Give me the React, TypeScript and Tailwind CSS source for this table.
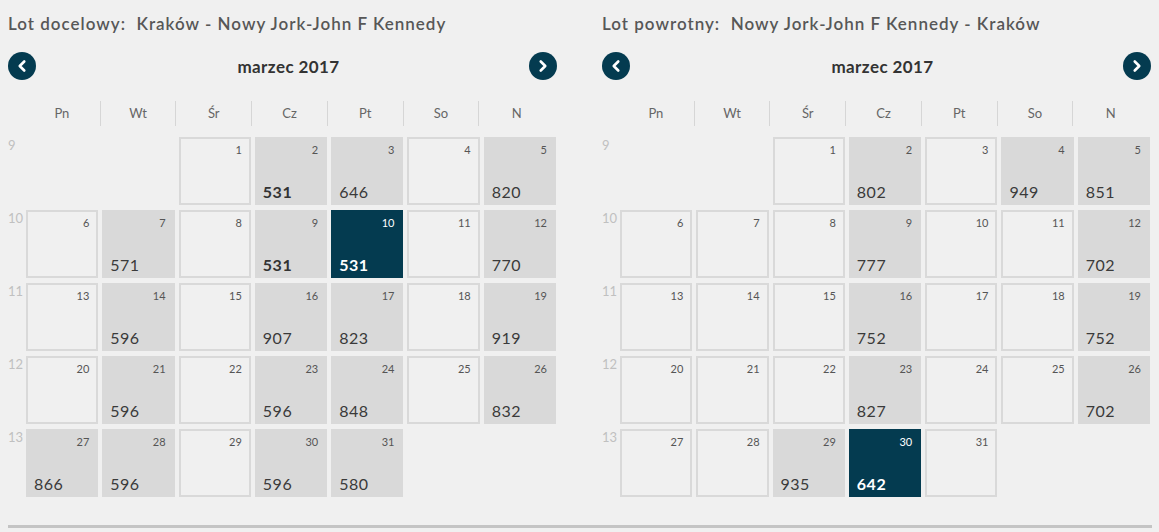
import { ChevronLeft, ChevronRight } from 'lucide-react';

type Day = { d: number; price?: number; best?: boolean; selected?: boolean };

const dayNames = ['Pn', 'Wt', 'Śr', 'Cz', 'Pt', 'So', 'N'];
const weeks = [9, 10, 11, 12, 13];

const outbound: (Day | null)[] = [
  null, null,
  { d: 1 }, { d: 2, price: 531, best: true }, { d: 3, price: 646 }, { d: 4 }, { d: 5, price: 820 },
  { d: 6 }, { d: 7, price: 571 }, { d: 8 }, { d: 9, price: 531, best: true }, { d: 10, price: 531, selected: true }, { d: 11 }, { d: 12, price: 770 },
  { d: 13 }, { d: 14, price: 596 }, { d: 15 }, { d: 16, price: 907 }, { d: 17, price: 823 }, { d: 18 }, { d: 19, price: 919 },
  { d: 20 }, { d: 21, price: 596 }, { d: 22 }, { d: 23, price: 596 }, { d: 24, price: 848 }, { d: 25 }, { d: 26, price: 832 },
  { d: 27, price: 866 }, { d: 28, price: 596 }, { d: 29 }, { d: 30, price: 596 }, { d: 31, price: 580 },
];

const inbound: (Day | null)[] = [
  null, null,
  { d: 1 }, { d: 2, price: 802 }, { d: 3 }, { d: 4, price: 949 }, { d: 5, price: 851 },
  { d: 6 }, { d: 7 }, { d: 8 }, { d: 9, price: 777 }, { d: 10 }, { d: 11 }, { d: 12, price: 702 },
  { d: 13 }, { d: 14 }, { d: 15 }, { d: 16, price: 752 }, { d: 17 }, { d: 18 }, { d: 19, price: 752 },
  { d: 20 }, { d: 21 }, { d: 22 }, { d: 23, price: 827 }, { d: 24 }, { d: 25 }, { d: 26, price: 702 },
  { d: 27 }, { d: 28 }, { d: 29, price: 935 }, { d: 30, price: 642, selected: true }, { d: 31 },
];

function NavButton({ dir }: { dir: 'prev' | 'next' }) {
  const Icon = dir === 'prev' ? ChevronLeft : ChevronRight;
  return (
    <button className="flex h-7 w-7 shrink-0 items-center justify-center rounded-full bg-[#043b50] text-white">
      <Icon className="h-[18px] w-[18px]" strokeWidth={3.5} />
    </button>
  );
}

function Cell({ day }: { day: Day | null }) {
  if (!day) return <div className="h-[68px]" />;

  let cls = 'border-[#d9d9d9] bg-[#f0f0f0]';
  if (day.selected) cls = 'border-[#043b50] bg-[#043b50] text-white';
  else if (day.price) cls = 'border-[#d9d9d9] bg-[#d9d9d9]';

  return (
    <div className={`relative h-[68px] border-2 ${cls}`}>
      <span
        className={`absolute right-[7px] top-[3px] text-[11px] ${day.selected ? 'text-white' : 'text-[#555]'}`}
      >
        {day.d}
      </span>
      {day.price && (
        <span
          className={`absolute bottom-[3px] left-[6px] text-[16px] leading-[16px] tracking-[0.5px] ${
            day.selected ? 'font-bold text-white' : day.best ? 'font-bold text-[#333]' : 'text-[#3a3a3a]'
          }`}
        >
          {day.price}
        </span>
      )}
    </div>
  );
}

function Calendar({ title, days }: { title: string; days: (Day | null)[] }) {
  return (
    <div className="w-[550px]">
      <h2 className="h-[48px] whitespace-pre pt-[11px] text-[17px] font-semibold tracking-[1px] text-[#575757]">
        {title}
      </h2>
      <div className="flex h-[36px] items-center">
        <NavButton dir="prev" />
        <div className="flex-1 pl-[12px] pt-[2px] text-center text-[17px] font-bold tracking-[0.4px] text-[#333]">
          marzec 2017
        </div>
        <NavButton dir="next" />
      </div>
      <div className="mt-[17px] flex">
        <div className="w-[16px]" />
        <div className="grid w-[530px] grid-cols-7">
          {dayNames.map((n, i) => (
            <div
              key={n}
              className={`flex h-[25px] items-center justify-center text-[13px] text-[#666] ${
                i > 0 ? 'border-l border-[#d6d6d6]' : ''
              }`}
            >
              {n}
            </div>
          ))}
        </div>
      </div>
      <div className="mt-[11px] flex">
        <div className="flex w-[18px] flex-col gap-[5px]">
          {weeks.map(w => (
            <div key={w} className="h-[68px] pt-[2px] text-[13px] leading-[13px] text-[#c0c0c0]">
              {w}
            </div>
          ))}
        </div>
        <div className="grid w-[530px] grid-cols-7 gap-x-[4px] gap-y-[5px]">
          {days.map((day, i) => (
            <Cell key={i} day={day} />
          ))}
        </div>
      </div>
    </div>
  );
}

export default function App() {
  return (
    <div className="h-[532px] w-[1159px] bg-[#f0f0f0] px-[8px] font-['Lato',sans-serif]">
      <div className="flex gap-[45px]">
        <Calendar title="Lot docelowy:  Kraków - Nowy Jork-John F Kennedy" days={outbound} />
        <Calendar title="Lot powrotny:  Nowy Jork-John F Kennedy - Kraków" days={inbound} />
      </div>
      <div className="mt-[28px] h-[3px] w-[1144px] bg-[#c4c4c4]" />
    </div>
  );
}
